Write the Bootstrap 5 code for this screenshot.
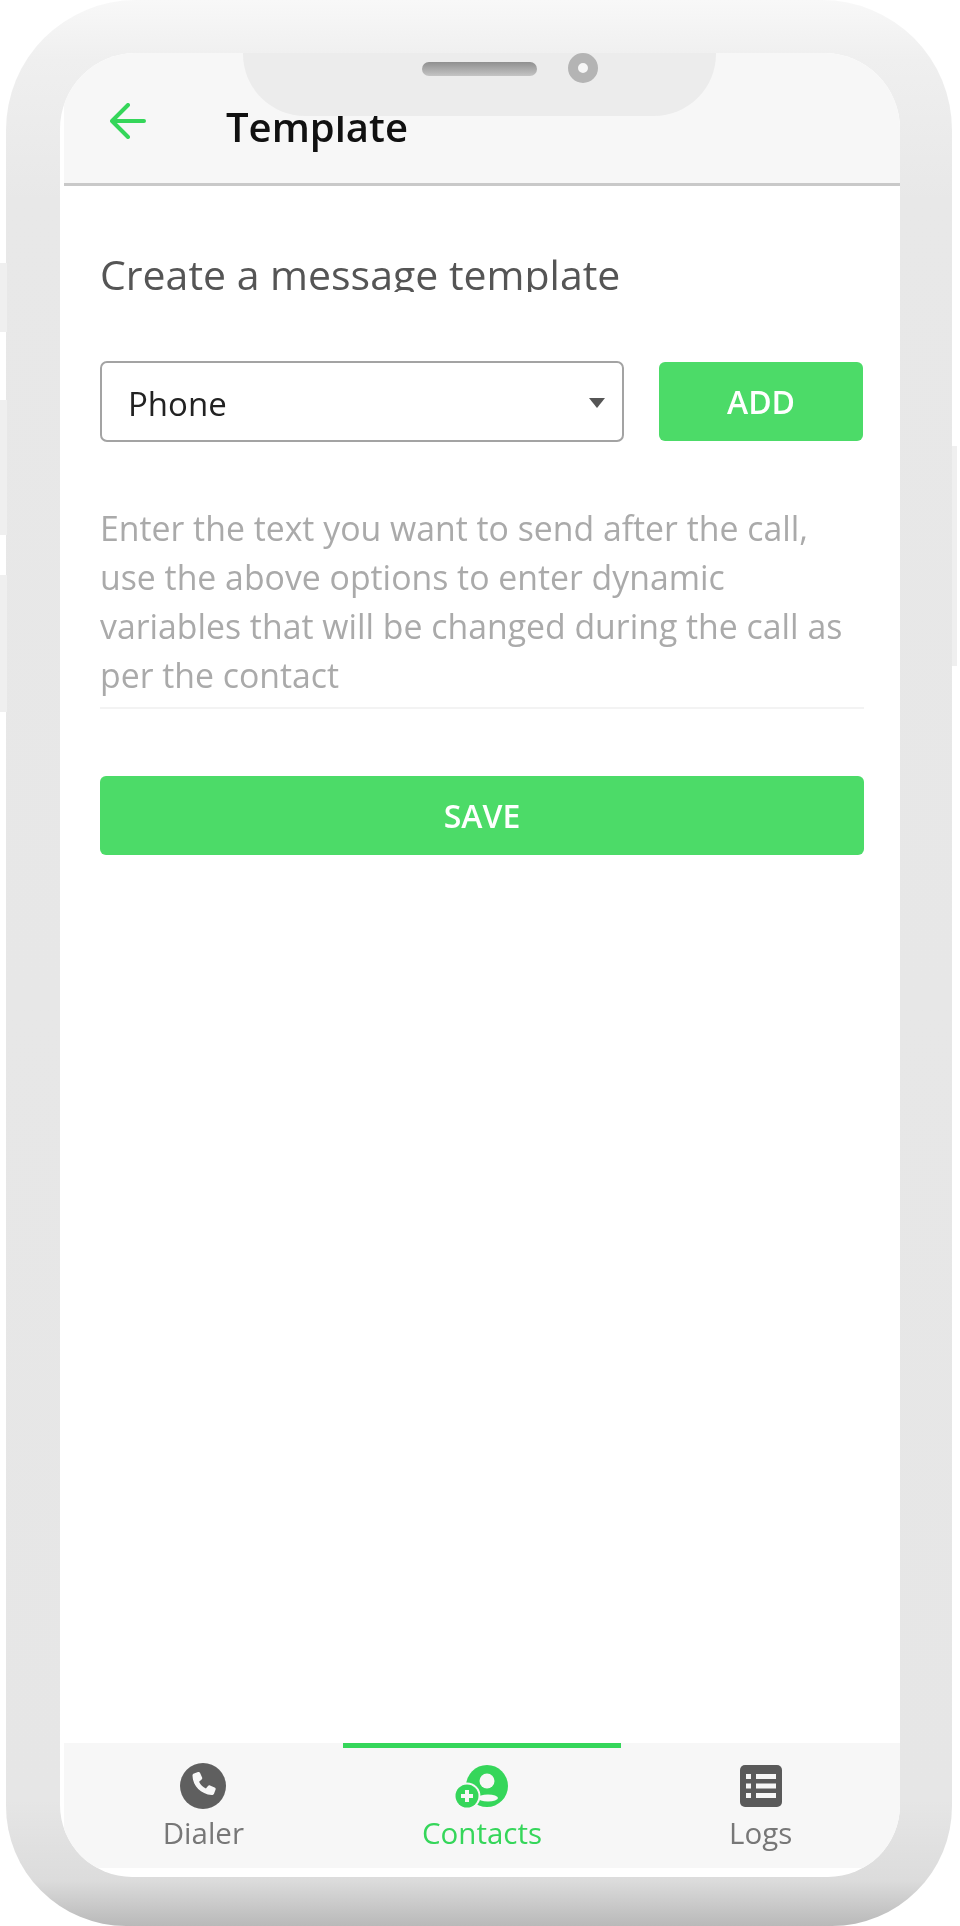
<!DOCTYPE html>
<html>
<head>
  <meta charset="utf-8" />
  <title>Template</title>
  <link href="https://cdn.jsdelivr.net/npm/bootstrap@5.3.2/dist/css/bootstrap.min.css" rel="stylesheet">
  <style>
    body {
      margin: 0;
      background: #fff;
      font-family: "Open Sans", "Noto Sans", sans-serif;
    }
    .phone-shell {
      position: relative;
      width: 946px;
      height: 1926px;
      margin-left: 6px;
      padding: 53px 52px 49px 54px;
      border-radius: 130px 130px 120px 120px;
      background: linear-gradient(180deg, #f8f8f8 0, #efefef 60px, #e8e8e8 200px, #e6e6e6 1800px, #dcdcdc 1880px, #b9b9b9 1926px);
    }
    .side-key {
      position: absolute;
      width: 7px;
      background: #efefef;
    }
    .screen {
      height: 100%;
      padding-left: 4px;
      border-radius: 76px 76px 72px 72px;
      overflow: hidden;
      background: #fff;
      filter: blur(.5px);
    }
    .app-head {
      height: 133px;
      padding: 50px 0 0 46px;
      background: #f7f7f7;
      border-bottom: 3px solid #c9c9c9;
      gap: 80px;
    }
    .app-head h1 {
      margin: 0;
      font-size: 40px;
      line-height: 48px;
      font-weight: 600;
      color: #111;
    }
    .notch {
      position: absolute;
      left: 237px;
      top: 53px;
      width: 473px;
      height: 63px;
      background: #ececec;
      border-radius: 0 0 62px 62px;
    }
    .speaker {
      position: absolute;
      left: 179px;
      top: 9px;
      width: 115px;
      height: 14px;
      border-radius: 7px;
      background: linear-gradient(#8f8f8f, #c4c4c4);
    }
    .camera {
      position: absolute;
      left: 325px;
      top: 0;
      width: 30px;
      height: 30px;
      border-radius: 50%;
      border: 10px solid #b4b4b4;
      background: #f6f6f6;
    }
    .page-body {
      padding: 0 36px;
    }
    .page-title {
      height: 43px;
      margin: 63px 0 69px;
      overflow: hidden;
      font-size: 41px;
      line-height: 50px;
      font-weight: 400;
      color: #555;
    }
    .phone-select {
      width: 524px;
      height: 81px;
      padding: 4px 50px 0 26px;
      font-size: 33px;
      color: #222;
      border: 2px solid #a3a3a3;
      border-radius: 7px;
      background-image: url("data:image/svg+xml,%3csvg xmlns='http://www.w3.org/2000/svg' viewBox='0 0 16 10'%3e%3cpath fill='%23555' d='M0 0h16L8 10z'/%3e%3c/svg%3e");
      background-size: 16px 10px;
      background-position: right 17px top 35px;
    }
    .btn-green {
      background: #4cdb68;
      border: 0;
      border-radius: 6px;
      color: #fff;
      font-size: 32px;
      line-height: 40px;
      font-weight: 600;
      height: 79px;
    }
    .btn-add {
      width: 204px;
      margin-left: 35px;
    }
    .hint {
      margin: 62px 0 0;
      padding-bottom: 7px;
      border-bottom: 2px solid #f3f3f3;
      font-size: 33.8px;
      line-height: 49px;
      color: #aaa;
    }
    .btn-save {
      margin-top: 67px;
    }
    .tab-bar {
      height: 125px;
      margin-bottom: 9px;
      background: #f7f7f7;
    }
    .tab-item {
      flex: 1 1 0;
      padding-top: 15px;
      border-top: 5px solid transparent;
      font-size: 29.5px;
      line-height: 38px;
      color: #777;
    }
    .tab-item svg {
      display: block;
      height: 46px;
      margin-bottom: 5px;
    }
    .tab-item.on {
      color: #35d65a;
      border-top-color: #35d65a;
    }
  </style>
</head>
<body>
  <div class="phone-shell">
    <div class="side-key" style="left:-6px;top:263px;height:69px"></div>
    <div class="side-key" style="left:-6px;top:400px;height:135px"></div>
    <div class="side-key" style="left:-6px;top:575px;height:137px"></div>
    <div class="side-key" style="left:946px;top:446px;height:220px;width:5px"></div>

    <div class="screen d-flex flex-column">
      <div class="app-head d-flex align-items-start">
        <svg width="36" height="36" viewBox="0 0 36 36" fill="none" stroke="#35d65a" stroke-width="4" stroke-linecap="round" stroke-linejoin="round"><path d="M34 18H3M18 2 2 18l16 16"/></svg>
        <h1>Template</h1>
      </div>

      <div class="page-body flex-grow-1">
        <h2 class="page-title">Create a message template</h2>
        <div class="d-flex align-items-center">
          <select class="form-select phone-select"><option>Phone</option></select>
          <button type="button" class="btn btn-green btn-add">ADD</button>
        </div>
        <p class="hint">Enter the text you want to send after the call, use the above options to enter dynamic variables that will be changed during the call as per the contact</p>
        <button type="button" class="btn btn-green btn-save w-100">SAVE</button>
      </div>

      <div class="tab-bar d-flex">
        <div class="tab-item d-flex flex-column align-items-center">
          <svg width="46" height="46" viewBox="0 0 46 46"><circle cx="23" cy="23" r="23" fill="#5f5f5f"/><path fill="#f7f7f7" d="M14 10.5l4-1.500c1-.3 1.700.1 2.100 1l2 4.600c.3.8.1 1.500-.5 2l-2.500 2.100c1.400 3 3.800 5.400 6.800 6.800l2.100-2.500c.5-.6 1.200-.8 2-.5l4.600 2c.9.4 1.300 1.100 1 2.100l-1.500 4c-.4 1-1.200 1.600-2.300 1.500C20.700 31 13 23.300 12.500 12.800c-.1-1.100.5-1.900 1.500-2.300z"/></svg>
          <span>Dialer</span>
        </div>
        <div class="tab-item on d-flex flex-column align-items-center">
          <svg width="56" height="46" viewBox="0 0 56 46"><circle cx="33" cy="23" r="21" fill="#35d65a"/><circle cx="33" cy="18" r="7.500" fill="#f7f7f7"/><ellipse cx="34" cy="35" rx="10" ry="3.500" fill="#f7f7f7"/><circle cx="13" cy="33" r="13.500" fill="#f7f7f7"/><circle cx="13" cy="33" r="11.500" fill="#35d65a"/><path stroke="#f7f7f7" stroke-width="4" d="M13 27v12M7 33h12"/></svg>
          <span>Contacts</span>
        </div>
        <div class="tab-item d-flex flex-column align-items-center">
          <svg width="42" height="46" viewBox="0 0 42 42"><rect width="42" height="42" rx="5" fill="#5a5a5a"/><g fill="#f7f7f7"><rect x="16" y="9" width="20" height="5"/><rect x="16" y="18.500" width="20" height="5"/><rect x="16" y="28" width="20" height="5"/><rect x="6" y="9" width="5" height="5"/><rect x="6" y="18.500" width="5" height="5"/><rect x="6" y="28" width="5" height="5"/></g></svg>
          <span>Logs</span>
        </div>
      </div>
    </div>

    <div class="notch">
      <div class="speaker"></div>
      <div class="camera"></div>
    </div>
  </div>
  <script src="https://cdn.jsdelivr.net/npm/bootstrap@5.3.2/dist/js/bootstrap.bundle.min.js"></script>
</body>
</html>
